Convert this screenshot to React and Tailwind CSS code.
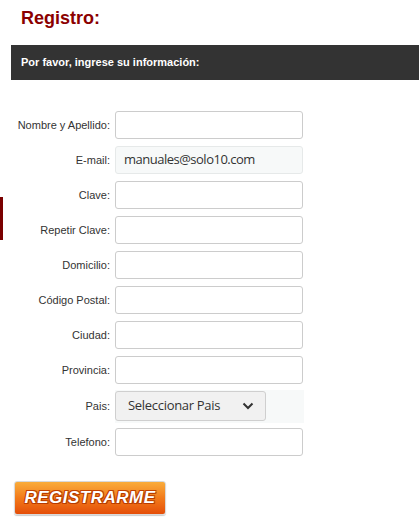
import React from 'react';

const fields = [
  { label: 'Nombre y Apellido:', type: 'text' },
  { label: 'E-mail:', type: 'email', value: 'manuales@solo10.com' },
  { label: 'Clave:', type: 'password' },
  { label: 'Repetir Clave:', type: 'password' },
  { label: 'Domicilio:', type: 'text' },
  { label: 'Código Postal:', type: 'text' },
  { label: 'Ciudad:', type: 'text' },
  { label: 'Provincia:', type: 'text' },
  { label: 'Pais:', type: 'select' },
  { label: 'Telefono:', type: 'text' },
];

const App = () => {
  return (
    <div className="relative w-[419px] h-[522px] bg-white overflow-hidden font-['Liberation_Sans',Arial,sans-serif]">
      {/* left accent */}
      <div className="absolute left-0 top-[197px] w-[3px] h-[43px] bg-[#7a0000]"></div>

      <h1 className="pl-[21px] pt-[6px] h-[45px] text-[18px] font-bold text-[#8b0000] leading-[24px]">
        Registro:
      </h1>

      <div className="ml-[11px] h-[35px] bg-[#333333] flex items-center pl-[10px]">
        <p className="text-[11px] font-bold text-white">Por favor, ingrese su información:</p>
      </div>

      {/* Form */}
      <div className="pt-[31px] flex flex-col gap-[7px]">
        {fields.map((f) => (
          <div key={f.label} className={`flex items-center ${f.type === 'select' ? 'h-[30px]' : 'h-[28px]'}`}>
            <label className="w-[111px] pr-[1px] text-right text-[11px] text-[#333]">
              {f.label}
            </label>
            <div className="ml-[4px]">
              {f.type === 'select' ? (
                <div className="w-[189px] h-[33px] -my-[1px] bg-[#f7f9f9] flex items-center">
                  <div className="w-[151px] h-[30px] border border-[#cfcfcf] rounded-[3px] bg-[#f1f1f1] flex items-center justify-between pl-[12px] pr-[11px]">
                    <span className="text-[13px] tracking-[-0.3px] text-[#333] font-['Open_Sans',sans-serif]">Seleccionar Pais</span>
                    <svg width="12" height="8" viewBox="0 0 12 8">
                      <path d="M1.5 1.5 L6 6 L10.5 1.5" fill="none" stroke="#333" strokeWidth="2" />
                    </svg>
                  </div>
                </div>
              ) : f.value ? (
                <div className="w-[188px] h-[28px] border border-[#e6e9e9] rounded-[3px] bg-[#f7f9f9] flex items-center pl-[8px]">
                  <span className="text-[13px] tracking-[-0.5px] text-[#333] font-['Open_Sans',sans-serif]">{f.value}</span>
                </div>
              ) : (
                <input
                  type={f.type}
                  className="w-[188px] h-[28px] border border-[#cccccc] rounded-[3px] bg-white outline-none"
                />
              )}
            </div>
          </div>
        ))}
      </div>

      <div className="pl-[14px] pt-[25px]">
        <button className="w-[152px] h-[34px] rounded-[3px] bg-gradient-to-b from-[#f9ac3a] via-[#f27a1a] to-[#e44d08] border border-[#d9d9d9] flex items-center justify-center shadow-[0_1px_1px_rgba(0,0,0,0.2)]">
          <span className="text-[17px] font-black italic text-white tracking-[0.5px] [text-shadow:0_0_1px_#b63b00,1px_1px_0_#b63b00,-1px_-1px_0_#c24300,1px_-1px_0_#c24300,-1px_1px_0_#c24300]">
            REGISTRARME
          </span>
        </button>
      </div>
    </div>
  );
};

export default App;
